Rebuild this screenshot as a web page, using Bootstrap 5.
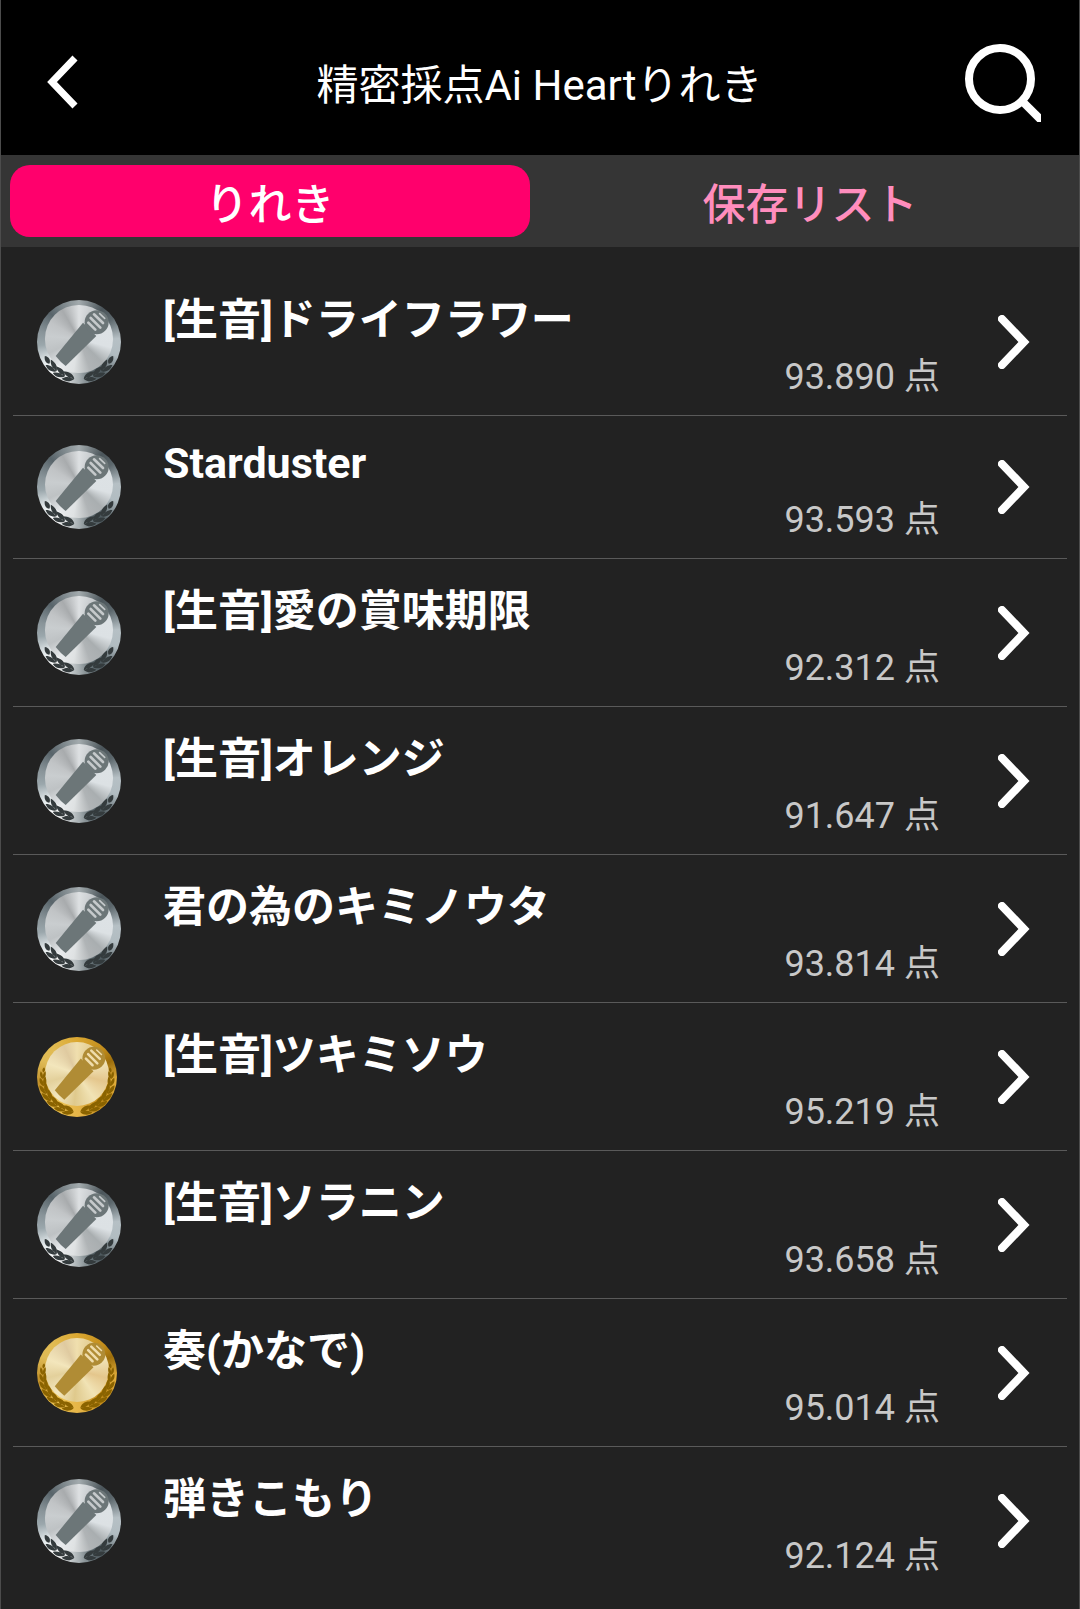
<!DOCTYPE html>
<html lang="ja" data-bs-theme="dark">
<head>
<meta charset="utf-8">
<meta name="viewport" content="width=device-width, initial-scale=1">
<title>精密採点Ai Heartりれき</title>
<link rel="stylesheet" href="https://cdn.jsdelivr.net/npm/bootstrap@5.3.0/dist/css/bootstrap.min.css">
<style>
  body { background: #222; color: #fff; font-family: Roboto, "Noto Sans CJK JP", sans-serif; }
  .app-shell { border: solid #4c4c4c; border-width: 0 1px; min-height: 100vh; }
  .app-header { background: #000; height: 155px; padding: 8px 38px 0 37px; }
  .app-title { font-size: 42px; line-height: 50px; font-weight: 400; padding-top: 8px; }
  .icon-btn { width: 80px; height: 80px; background: none; border: 0; padding: 0; color: #fff; display: flex; align-items: center; }
  .tab-bar { background: #353535; padding: 10px 9px; gap: 20px; }
  .tab-bar .nav-link { height: 72px; padding: 8px 0 0; border-radius: 20px; font-size: 43px; line-height: 64px; font-weight: 500; color: #ff8dbd; flex: 1 1 0; }
  .tab-bar .nav-link.active { background: #ff006c; color: #fff; }
  .song-list { padding: 21px 12px 0; --bs-list-group-bg: transparent; }
  .song-item { border: 0; border-bottom: 1px solid #5a5a5a; padding: 16px 37px 16px 24px; color: #fff; background: transparent; }
  .song-item:last-child { border-bottom-color: transparent; }
  .medal-cell { width: 126px; }
  .song-text { padding-top: 9px; }
  .song-title { font-size: 43px; line-height: 54px; font-weight: 700; margin: 0 0 8px; }
  .song-title:lang(en) { line-height: 49px; margin-top: -2px; margin-bottom: 10px; }
  .song-score { font-size: 36px; line-height: 44px; color: #c8c8c8; margin: 0; padding-right: 58px; }
  .medal { position: relative; display: block; border-radius: 50%; overflow: hidden; }
  .medal svg { position: relative; display: block; width: 100%; height: 100%; }
  .medal::before { content: ""; position: absolute; left: 10%; top: 7%; width: 80%; height: 80%; border-radius: 50%; }
  .medal-silver { width: 84px; height: 84px; color: #343b3d; --mic: #6c7678; --mic-light: #c5c9cb;
    background: conic-gradient(#a3abae, #4b555a 35deg, #5c676c 55deg, #b6c0c5 85deg, #b1bcc1 110deg, #4c585d 145deg, #647075 160deg, #a7afb2 180deg, #fff 215deg, #e4eaec 240deg, #9ba7ac 265deg, #899499 285deg, #58646a 315deg, #a3abae); }
  .medal-silver::before { background: conic-gradient(#dde0e2, #c2c6c9 30deg, #dde2e5 70deg, #dce1e4 105deg, #a9aeb0 135deg, #b0b4b6 160deg, #dfe2e3 190deg, #e7eaec 215deg, #bec2c4 245deg, #c9cdcf 275deg, #c1c4c6 300deg, #a8abad 330deg, #dde0e2); }
  .medal-gold { width: 80px; height: 80px; color: #8a6300; --mic: #b08c35; --mic-light: #efdcab;
    background: conic-gradient(#dba832, #c08b1b 45deg, #9d6e0b 65deg, #e2ae3c 95deg, #c48d1c 140deg, #e5b447 175deg, #edc353 215deg, #c2912a 260deg, #dfba55 295deg, #e1bb52 320deg, #dba832); }
  .medal-gold::before { background: conic-gradient(#f0dfae, #e2cc90 30deg, #f0e1b4 70deg, #e4c68c 105deg, #f1e3b5 145deg, #dfc98c 185deg, #f3e7bf 220deg, #e3d09b 255deg, #f3e6bc 290deg, #dfcaa0 335deg, #f0dfae); }
</style>
</head>
<body>

<svg width="0" height="0" class="d-none" aria-hidden="true">
  <path id="leaf-pair" d="M137 236 C128 220 115 220 100 222 C107 232 117 238 137 236 Z M137 237 C126 251 111 251 100 245 C110 235 122 234 137 237 Z" fill="currentColor"/>
  <path id="leaf-small" d="M134 236 C127 225 115 226 107 235 C117 244 127 244 134 236 Z" fill="currentColor"/>
  <symbol id="microphone" viewBox="0 0 252 252">
    <path d="M138 68 L56 168 Q70 186 86 198 L178 108 Z" fill="var(--mic)"/>
    <circle cx="179" cy="67" r="36" fill="var(--mic)"/>
    <g stroke="var(--mic-light)" stroke-width="8" stroke-linecap="round">
      <path d="M154 68 L175 89"/>
      <path d="M161 54 L190 83"/>
      <path d="M171 43 L198 69"/>
      <path d="M188 41 L203 55" stroke-width="5"/>
    </g>
  </symbol>
  <symbol id="wreath-short" viewBox="0 0 252 252">
    <g id="branch-short">
      <use href="#leaf-pair" transform="rotate(13 126 126)"/>
      <use href="#leaf-pair" transform="rotate(28 126 126)"/>
      <use href="#leaf-pair" transform="rotate(43 126 126)"/>
      <use href="#leaf-small" transform="rotate(58 126 126)"/>
    </g>
    <use href="#branch-short" transform="matrix(-1 0 0 1 252 0)"/>
  </symbol>
  <symbol id="wreath-long" viewBox="0 0 252 252">
    <g id="branch-long">
      <use href="#leaf-pair" transform="rotate(11 126 126)"/>
      <use href="#leaf-pair" transform="rotate(25 126 126)"/>
      <use href="#leaf-pair" transform="rotate(39 126 126)"/>
      <use href="#leaf-pair" transform="rotate(53 126 126)"/>
      <use href="#leaf-pair" transform="rotate(66 126 126) translate(12 24) scale(.9)"/>
      <use href="#leaf-pair" transform="rotate(78 126 126) translate(26 50) scale(.78)"/>
      <use href="#leaf-pair" transform="rotate(89 126 126) translate(40 78) scale(.66)"/>
      <use href="#leaf-small" transform="rotate(99 126 126) translate(48 92) scale(.6)"/>
    </g>
    <use href="#branch-long" transform="matrix(-1 0 0 1 252 0)"/>
  </symbol>
  <symbol id="silver-art" viewBox="0 0 252 252"><use href="#wreath-short"/><use href="#microphone"/></symbol>
  <symbol id="gold-art" viewBox="0 0 252 252"><use href="#wreath-long"/><use href="#microphone"/></symbol>
  <symbol id="chevron-next" viewBox="0 0 32 54">
    <path d="M4 4 L26 27 L4 50" fill="none" stroke="#fff" stroke-width="8" stroke-linecap="round" stroke-linejoin="miter"/>
  </symbol>
</svg>

<div class="app-shell">
  <header class="app-header d-flex align-items-center justify-content-between">
    <button type="button" class="icon-btn justify-content-start" aria-label="戻る">
      <svg class="ms-2" width="34" height="54" viewBox="0 0 34 54"><path d="M29 3 L6 27 L29 51" fill="none" stroke="#fff" stroke-width="7"/></svg>
    </button>
    <h1 class="app-title m-0">精密採点Ai Heartりれき</h1>
    <button type="button" class="icon-btn justify-content-end" aria-label="検索">
      <svg width="78" height="80" viewBox="0 0 78 80"><circle cx="37" cy="37" r="31" fill="none" stroke="#fff" stroke-width="8"/><path d="M59 59 L84 84" stroke="#fff" stroke-width="8"/></svg>
    </button>
  </header>

  <nav class="tab-bar nav nav-pills flex-nowrap text-center">
    <a class="nav-link active" aria-current="page" href="#history">りれき</a>
    <a class="nav-link" href="#saved">保存リスト</a>
  </nav>

  <main class="song-list list-group list-group-flush" id="history">
    <a href="#song1" class="song-item list-group-item list-group-item-action d-flex align-items-center">
      <span class="medal-cell flex-shrink-0"><span class="medal medal-silver"><svg aria-hidden="true"><use href="#silver-art"/></svg></span></span>
      <div class="song-text flex-grow-1"><h2 class="song-title">[生音]ドライフラワー</h2><p class="song-score text-end">93.890 点</p></div>
      <svg class="flex-shrink-0" width="32" height="54" aria-hidden="true"><use href="#chevron-next"/></svg>
    </a>
    <a href="#song2" class="song-item list-group-item list-group-item-action d-flex align-items-center">
      <span class="medal-cell flex-shrink-0"><span class="medal medal-silver"><svg aria-hidden="true"><use href="#silver-art"/></svg></span></span>
      <div class="song-text flex-grow-1"><h2 class="song-title" lang="en">Starduster</h2><p class="song-score text-end">93.593 点</p></div>
      <svg class="flex-shrink-0" width="32" height="54" aria-hidden="true"><use href="#chevron-next"/></svg>
    </a>
    <a href="#song3" class="song-item list-group-item list-group-item-action d-flex align-items-center">
      <span class="medal-cell flex-shrink-0"><span class="medal medal-silver"><svg aria-hidden="true"><use href="#silver-art"/></svg></span></span>
      <div class="song-text flex-grow-1"><h2 class="song-title">[生音]愛の賞味期限</h2><p class="song-score text-end">92.312 点</p></div>
      <svg class="flex-shrink-0" width="32" height="54" aria-hidden="true"><use href="#chevron-next"/></svg>
    </a>
    <a href="#song4" class="song-item list-group-item list-group-item-action d-flex align-items-center">
      <span class="medal-cell flex-shrink-0"><span class="medal medal-silver"><svg aria-hidden="true"><use href="#silver-art"/></svg></span></span>
      <div class="song-text flex-grow-1"><h2 class="song-title">[生音]オレンジ</h2><p class="song-score text-end">91.647 点</p></div>
      <svg class="flex-shrink-0" width="32" height="54" aria-hidden="true"><use href="#chevron-next"/></svg>
    </a>
    <a href="#song5" class="song-item list-group-item list-group-item-action d-flex align-items-center">
      <span class="medal-cell flex-shrink-0"><span class="medal medal-silver"><svg aria-hidden="true"><use href="#silver-art"/></svg></span></span>
      <div class="song-text flex-grow-1"><h2 class="song-title">君の為のキミノウタ</h2><p class="song-score text-end">93.814 点</p></div>
      <svg class="flex-shrink-0" width="32" height="54" aria-hidden="true"><use href="#chevron-next"/></svg>
    </a>
    <a href="#song6" class="song-item list-group-item list-group-item-action d-flex align-items-center">
      <span class="medal-cell flex-shrink-0"><span class="medal medal-gold"><svg aria-hidden="true"><use href="#gold-art"/></svg></span></span>
      <div class="song-text flex-grow-1"><h2 class="song-title">[生音]ツキミソウ</h2><p class="song-score text-end">95.219 点</p></div>
      <svg class="flex-shrink-0" width="32" height="54" aria-hidden="true"><use href="#chevron-next"/></svg>
    </a>
    <a href="#song7" class="song-item list-group-item list-group-item-action d-flex align-items-center">
      <span class="medal-cell flex-shrink-0"><span class="medal medal-silver"><svg aria-hidden="true"><use href="#silver-art"/></svg></span></span>
      <div class="song-text flex-grow-1"><h2 class="song-title">[生音]ソラニン</h2><p class="song-score text-end">93.658 点</p></div>
      <svg class="flex-shrink-0" width="32" height="54" aria-hidden="true"><use href="#chevron-next"/></svg>
    </a>
    <a href="#song8" class="song-item list-group-item list-group-item-action d-flex align-items-center">
      <span class="medal-cell flex-shrink-0"><span class="medal medal-gold"><svg aria-hidden="true"><use href="#gold-art"/></svg></span></span>
      <div class="song-text flex-grow-1"><h2 class="song-title">奏(かなで)</h2><p class="song-score text-end">95.014 点</p></div>
      <svg class="flex-shrink-0" width="32" height="54" aria-hidden="true"><use href="#chevron-next"/></svg>
    </a>
    <a href="#song9" class="song-item list-group-item list-group-item-action d-flex align-items-center">
      <span class="medal-cell flex-shrink-0"><span class="medal medal-silver"><svg aria-hidden="true"><use href="#silver-art"/></svg></span></span>
      <div class="song-text flex-grow-1"><h2 class="song-title">弾きこもり</h2><p class="song-score text-end">92.124 点</p></div>
      <svg class="flex-shrink-0" width="32" height="54" aria-hidden="true"><use href="#chevron-next"/></svg>
    </a>
  </main>
</div>

<script src="https://cdn.jsdelivr.net/npm/bootstrap@5.3.0/dist/js/bootstrap.bundle.min.js"></script>
</body>
</html>
